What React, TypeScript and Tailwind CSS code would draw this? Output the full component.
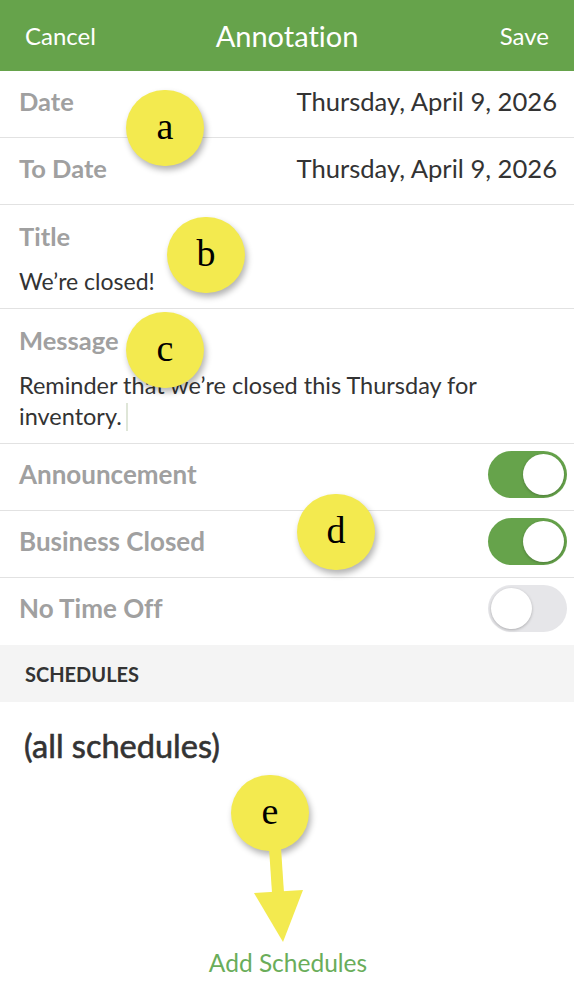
import React from 'react'

const font = { fontFamily: 'Lato, "Noto Sans", sans-serif' }

const Toggle = ({ on }: { on: boolean }) => (
  <div
    className={`relative w-[79px] h-[47px] rounded-full ${on ? 'bg-[#66a34b]' : 'bg-[#e6e6e9]'}`}
  >
    <div
      className={`absolute top-[3px] w-[41px] h-[41px] rounded-full bg-white shadow-[0_1px_3px_rgba(0,0,0,0.25)] ${on ? 'right-[3px]' : 'left-[3px]'}`}
    />
  </div>
)

const Bubble = ({ letter, className }: { letter: string; className: string }) => (
  <div
    className={`absolute w-[78px] h-[76px] rounded-full bg-[#f3ea4f] shadow-[2px_4px_6px_rgba(0,0,0,0.3)] flex items-center justify-center text-[38px] text-black ${className}`}
    style={{ fontFamily: '"Liberation Serif", serif' }}
  >
    <span className="-mt-1">{letter}</span>
  </div>
)

const App = () => {
  const switches = [
    { label: 'Announcement', on: true },
    { label: 'Business Closed', on: true },
    { label: 'No Time Off', on: false }
  ]

  return (
    <div className="relative w-[574px] h-[996px] bg-white overflow-hidden [font-variant-ligatures:none]" style={font}>
      {/* nav bar */}
      <div className="h-[71px] bg-[#66a34b] flex items-center px-[25px] text-white">
        <span className="flex-1 text-[24px]">Cancel</span>
        <span className="text-[29px]">Annotation</span>
        <span className="flex-1 text-right text-[24px]">Save</span>
      </div>

      {/* dates */}
      {['Date', 'To Date'].map((label) => (
        <div key={label} className="h-[67px] flex items-center justify-between px-[19px] pr-[17px] pb-[6px] border-b border-[#e2e2e2]">
          <span className="text-[25.5px] font-bold text-[#a0a0a0]">{label}</span>
          <span className="text-[25.6px] text-[#333]">Thursday, April 9, 2026</span>
        </div>
      ))}

      {/* title */}
      <div className="h-[104px] px-[19px] pt-[15px] border-b border-[#e2e2e2]">
        <div className="text-[25.5px] font-bold text-[#a0a0a0] leading-[32px]">Title</div>
        <div className="text-[23px] text-[#333] leading-[30px] mt-[14px]">We’re closed!</div>
      </div>

      {/* message */}
      <div className="h-[135px] px-[19px] pt-[15px] border-b border-[#e2e2e2]">
        <div className="text-[25.5px] font-bold text-[#a0a0a0] leading-[32px]">Message</div>
        <div className="text-[23.5px] text-[#333] leading-[31px] mt-[14px]">
          Reminder that we’re closed this Thursday for
          <br />
          inventory.
          <span className="inline-block align-middle w-[2px] h-[28px] bg-[#dfe6d8] ml-[4px] -mt-[4px]" />
        </div>
      </div>

      {/* switches */}
      {switches.map((s, i) => (
        <div
          key={s.label}
          className={`h-[67px] flex items-center justify-between pl-[19px] pr-[7px] pb-[6px] ${i < 2 ? 'border-b border-[#e2e2e2]' : ''}`}
        >
          <span className="text-[26px] font-bold text-[#a0a0a0]">{s.label}</span>
          <Toggle on={s.on} />
        </div>
      ))}

      {/* schedules */}
      <div className="h-[57px] bg-[#f4f4f4] flex items-center px-[25px]">
        <span className="text-[20px] font-bold text-[#333]">SCHEDULES</span>
      </div>
      <div className="px-[24px] pt-[20px]">
        <span className="text-[32.5px] text-[#333] [-webkit-text-stroke:0.6px_#333]">(all schedules)</span>
      </div>

      <div className="absolute bottom-[14px] left-0 w-full flex justify-center">
        <span className="text-[24.5px] text-[#6aad5a] ml-[2px]">Add Schedules</span>
      </div>

      {/* callouts */}
      <Bubble letter="a" className="left-[126px] top-[90px]" />
      <Bubble letter="b" className="left-[167px] top-[217px]" />
      <Bubble letter="c" className="left-[126px] top-[312px]" />
      <Bubble letter="d" className="left-[297px] top-[494px]" />
      <Bubble letter="e" className="left-[231px] top-[775px]" />
      <svg className="absolute left-0 top-0" width="574" height="996" viewBox="0 0 574 996">
        <polygon points="269,848 281,848 284,893 272,893" fill="#f3ea4f" />
        <polygon points="254,893 303,890 283,942" fill="#f3ea4f" />
      </svg>
    </div>
  )
}

export default App
